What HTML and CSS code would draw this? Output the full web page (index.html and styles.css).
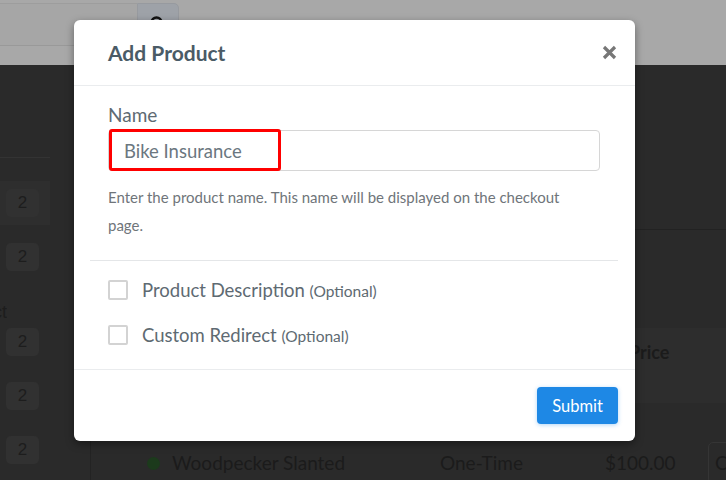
FILE: index.html
```html
<!DOCTYPE html>
<html lang="en">
<head>
    <meta charset="UTF-8">
    <title>Products</title>
    <link rel="stylesheet" href="styles.css">
</head>
<body>
    <div class="page">
        <header class="topbar">
            <div class="search">
                <div class="search-field"></div>
                <div class="search-btn">
                    <svg width="16" height="16" viewBox="0 0 16 16"><circle cx="6.5" cy="6.5" r="5" fill="none" stroke="#111" stroke-width="2.4"/><path d="M10 10l4.5 4.5" stroke="#111" stroke-width="2.4" stroke-linecap="round"/></svg>
                </div>
            </div>
        </header>

        <main class="main">
            <aside class="sidebar">
                <div class="side-rule"></div>
                <div class="side-item active"><span class="count">2</span></div>
                <div class="side-item"><span class="count">2</span></div>
                <div class="side-heading"><span>Product</span></div>
                <div class="side-item first"><span class="count">2</span></div>
                <div class="side-item"><span class="count">2</span></div>
                <div class="side-item"><span class="count">2</span></div>
            </aside>

            <section class="panel">
                <div class="panel-top"></div>
                <div class="table">
                    <div class="table-head">
                        <div class="cell"></div>
                        <div class="cell"></div>
                        <div class="cell head-price">Price</div>
                        <div class="cell"></div>
                    </div>
                    <div class="table-row">
                        <div class="cell product-name"><span class="status-dot"></span>Woodpecker Slanted</div>
                        <div class="cell">One-Time</div>
                        <div class="cell">$100.00</div>
                        <div class="cell"><span class="row-btn">Copy</span></div>
                    </div>
                </div>
            </section>
        </main>

        <div class="modal">
            <div class="modal-header">
                <h2 class="modal-title">Add Product</h2>
                <button class="close-btn" aria-label="Close">
                    <svg width="15" height="15" viewBox="0 0 15 15"><path d="M2 2l11 11M13 2L2 13" stroke="#777" stroke-width="3.2"/></svg>
                </button>
            </div>

            <div class="modal-body">
                <div class="field">
                    <label class="field-label" for="productName">Name</label>
                    <div class="input-wrap">
                        <input class="text-input" id="productName" type="text" value="Bike Insurance">
                        <span class="highlight"></span>
                    </div>
                    <p class="help-text">Enter the product name. This name will be displayed on the checkout page.</p>
                </div>

                <div class="divider"></div>

                <label class="option">
                    <span class="checkbox"></span>
                    <span class="option-label">Product Description <small>(Optional)</small></span>
                </label>
                <label class="option">
                    <span class="checkbox"></span>
                    <span class="option-label">Custom Redirect <small>(Optional)</small></span>
                </label>
            </div>

            <div class="modal-footer">
                <button class="btn-submit">Submit</button>
            </div>
        </div>
    </div>
</body>
</html>
```

FILE: styles.css
```css
html, body {
    margin: 0;
    padding: 0;
    height: 100%;
    overflow: hidden;
}

body {
    background: #2a2a2a;
    font-family: Lato, 'Open Sans', sans-serif;
}

.page {
    position: relative;
    width: 726px;
    height: 480px;
    overflow: hidden;
}

/* dimmed page behind the dialog */

.topbar {
    height: 65px;
    background: #a8a8a8;
}

.search {
    display: flex;
    padding-top: 3px;
}

.search-field {
    width: 137px;
    height: 41px;
    border-top: 1px solid #9d9d9d;
    border-bottom: 1px solid #999;
    background: #a6a6a6;
}

.search-btn {
    width: 42px;
    height: 42px;
    background: #9ea2a8;
    border: 1px solid #979a9f;
    border-radius: 0 5px 5px 0;
    display: flex;
    justify-content: center;
    padding-top: 12px;
    box-sizing: border-box;
}

.main {
    display: flex;
    height: 415px;
}

.sidebar {
    width: 50px;
    flex-shrink: 0;
    padding-top: 92px;
}

.side-rule {
    border-top: 1px solid #333;
}

.side-item {
    height: 44px;
    display: flex;
    align-items: center;
    padding-left: 6px;
    margin-top: 10px;
}

.side-item.active {
    margin-top: 23px;
    background: #2e2e2e;
}

.side-item.first {
    margin-top: 0;
}

.count {
    width: 33px;
    height: 28px;
    border-radius: 5px;
    background: #313131;
    color: #1d1d1d;
    font-family: 'Liberation Sans', sans-serif;
    font-size: 17px;
    display: flex;
    align-items: center;
    justify-content: center;
}

.side-heading {
    width: 7px;
    height: 16px;
    margin-top: 25px;
    display: flex;
    justify-content: flex-end;
    overflow: hidden;
    color: #1d1d1d;
    font-family: 'Liberation Sans', sans-serif;
    font-size: 18px;
    line-height: 16px;
    white-space: nowrap;
}

.panel {
    flex: 1;
    margin-left: 40px;
    border-left: 1px solid #232323;
}

.panel-top {
    height: 164px;
    border-bottom: 1px solid #222;
    margin-bottom: 98px;
}

.table-head,
.table-row {
    display: grid;
    grid-template-columns: 293px 165px 103px 1fr;
    padding-left: 56px;
    color: #1b1b1b;
    font-size: 19px;
}

.table-head {
    height: 75px;
    padding-top: 12px;
    box-sizing: border-box;
    background: #2d2d2d;
    line-height: 24px;
    font-weight: bold;
    font-size: 18px;
}

.head-price {
    padding-left: 24px;
}

.table-row {
    padding-top: 39px;
    line-height: 24px;
    align-items: center;
}

.product-name {
    display: flex;
    align-items: center;
}

.status-dot {
    flex-shrink: 0;
    width: 13px;
    height: 13px;
    border-radius: 50%;
    background: #1c3a1c;
    margin-right: 12px;
}

.row-btn {
    display: inline-block;
    padding: 8px 6px;
    border: 1px solid #353535;
    border-radius: 5px;
}

/* dialog */

.modal {
    position: absolute;
    top: 20px;
    left: 74px;
    width: 561px;
    height: 421px;
    background: #fff;
    border-radius: 6px;
    box-shadow: 0 3px 9px rgba(0, 0, 0, 0.4);
    display: flex;
    flex-direction: column;
}

.modal-header {
    height: 65px;
    flex-shrink: 0;
    display: flex;
    align-items: center;
    justify-content: space-between;
    padding: 0 18px 0 34px;
    border-bottom: 1px solid #eaecee;
}

.modal-title {
    margin: 0;
    font-size: 21px;
    font-weight: bold;
    color: #4a5b66;
}

.close-btn {
    background: none;
    border: none;
    padding: 0;
    width: 15px;
    height: 15px;
    cursor: pointer;
    display: flex;
}

.modal-body {
    flex: 1;
    padding: 0 17px 0 16px;
}

.field {
    padding: 18px 18px 0;
}

.field-label {
    display: block;
    font-size: 19px;
    line-height: 22px;
    color: #5e6a72;
}

.input-wrap {
    position: relative;
    margin-top: 4px;
}

.text-input {
    display: block;
    width: 100%;
    height: 41px;
    box-sizing: border-box;
    border: 1px solid #d6d6d6;
    border-radius: 4px;
    padding: 0 15px;
    font-family: inherit;
    font-size: 18.5px;
    color: #6b7780;
    outline: none;
}

.highlight {
    position: absolute;
    top: -1px;
    left: 1px;
    width: 172px;
    height: 42px;
    box-sizing: border-box;
    border: 3px solid #ff0000;
    border-radius: 3px;
}

.help-text {
    margin: 12px 0 0;
    padding-right: 20px;
    font-size: 15px;
    line-height: 28px;
    color: #6f757a;
}

.divider {
    margin-top: 21px;
    border-top: 1px solid #e4e6e8;
}

.option {
    display: flex;
    align-items: center;
    height: 45px;
    padding-left: 18px;
    cursor: pointer;
}

.divider + .option {
    margin-top: 6px;
}

.checkbox {
    width: 20px;
    height: 20px;
    box-sizing: border-box;
    border: 2px solid #d3d3d3;
    border-radius: 2px;
    margin-right: 14px;
}

.option-label {
    font-size: 18.5px;
    color: #5e6a72;
}

.option-label small {
    font-size: 15.5px;
}

.modal-footer {
    height: 72px;
    flex-shrink: 0;
    box-sizing: border-box;
    border-top: 1px solid #eaecee;
    display: flex;
    justify-content: flex-end;
    align-items: center;
    padding: 0 17px;
}

.btn-submit {
    width: 81px;
    height: 37px;
    border: none;
    border-radius: 4px;
    background: #1e88e5;
    color: #fff;
    font-family: inherit;
    font-size: 16.5px;
    box-shadow: 0 1px 4px rgba(30, 136, 229, 0.35);
    cursor: pointer;
}
```
